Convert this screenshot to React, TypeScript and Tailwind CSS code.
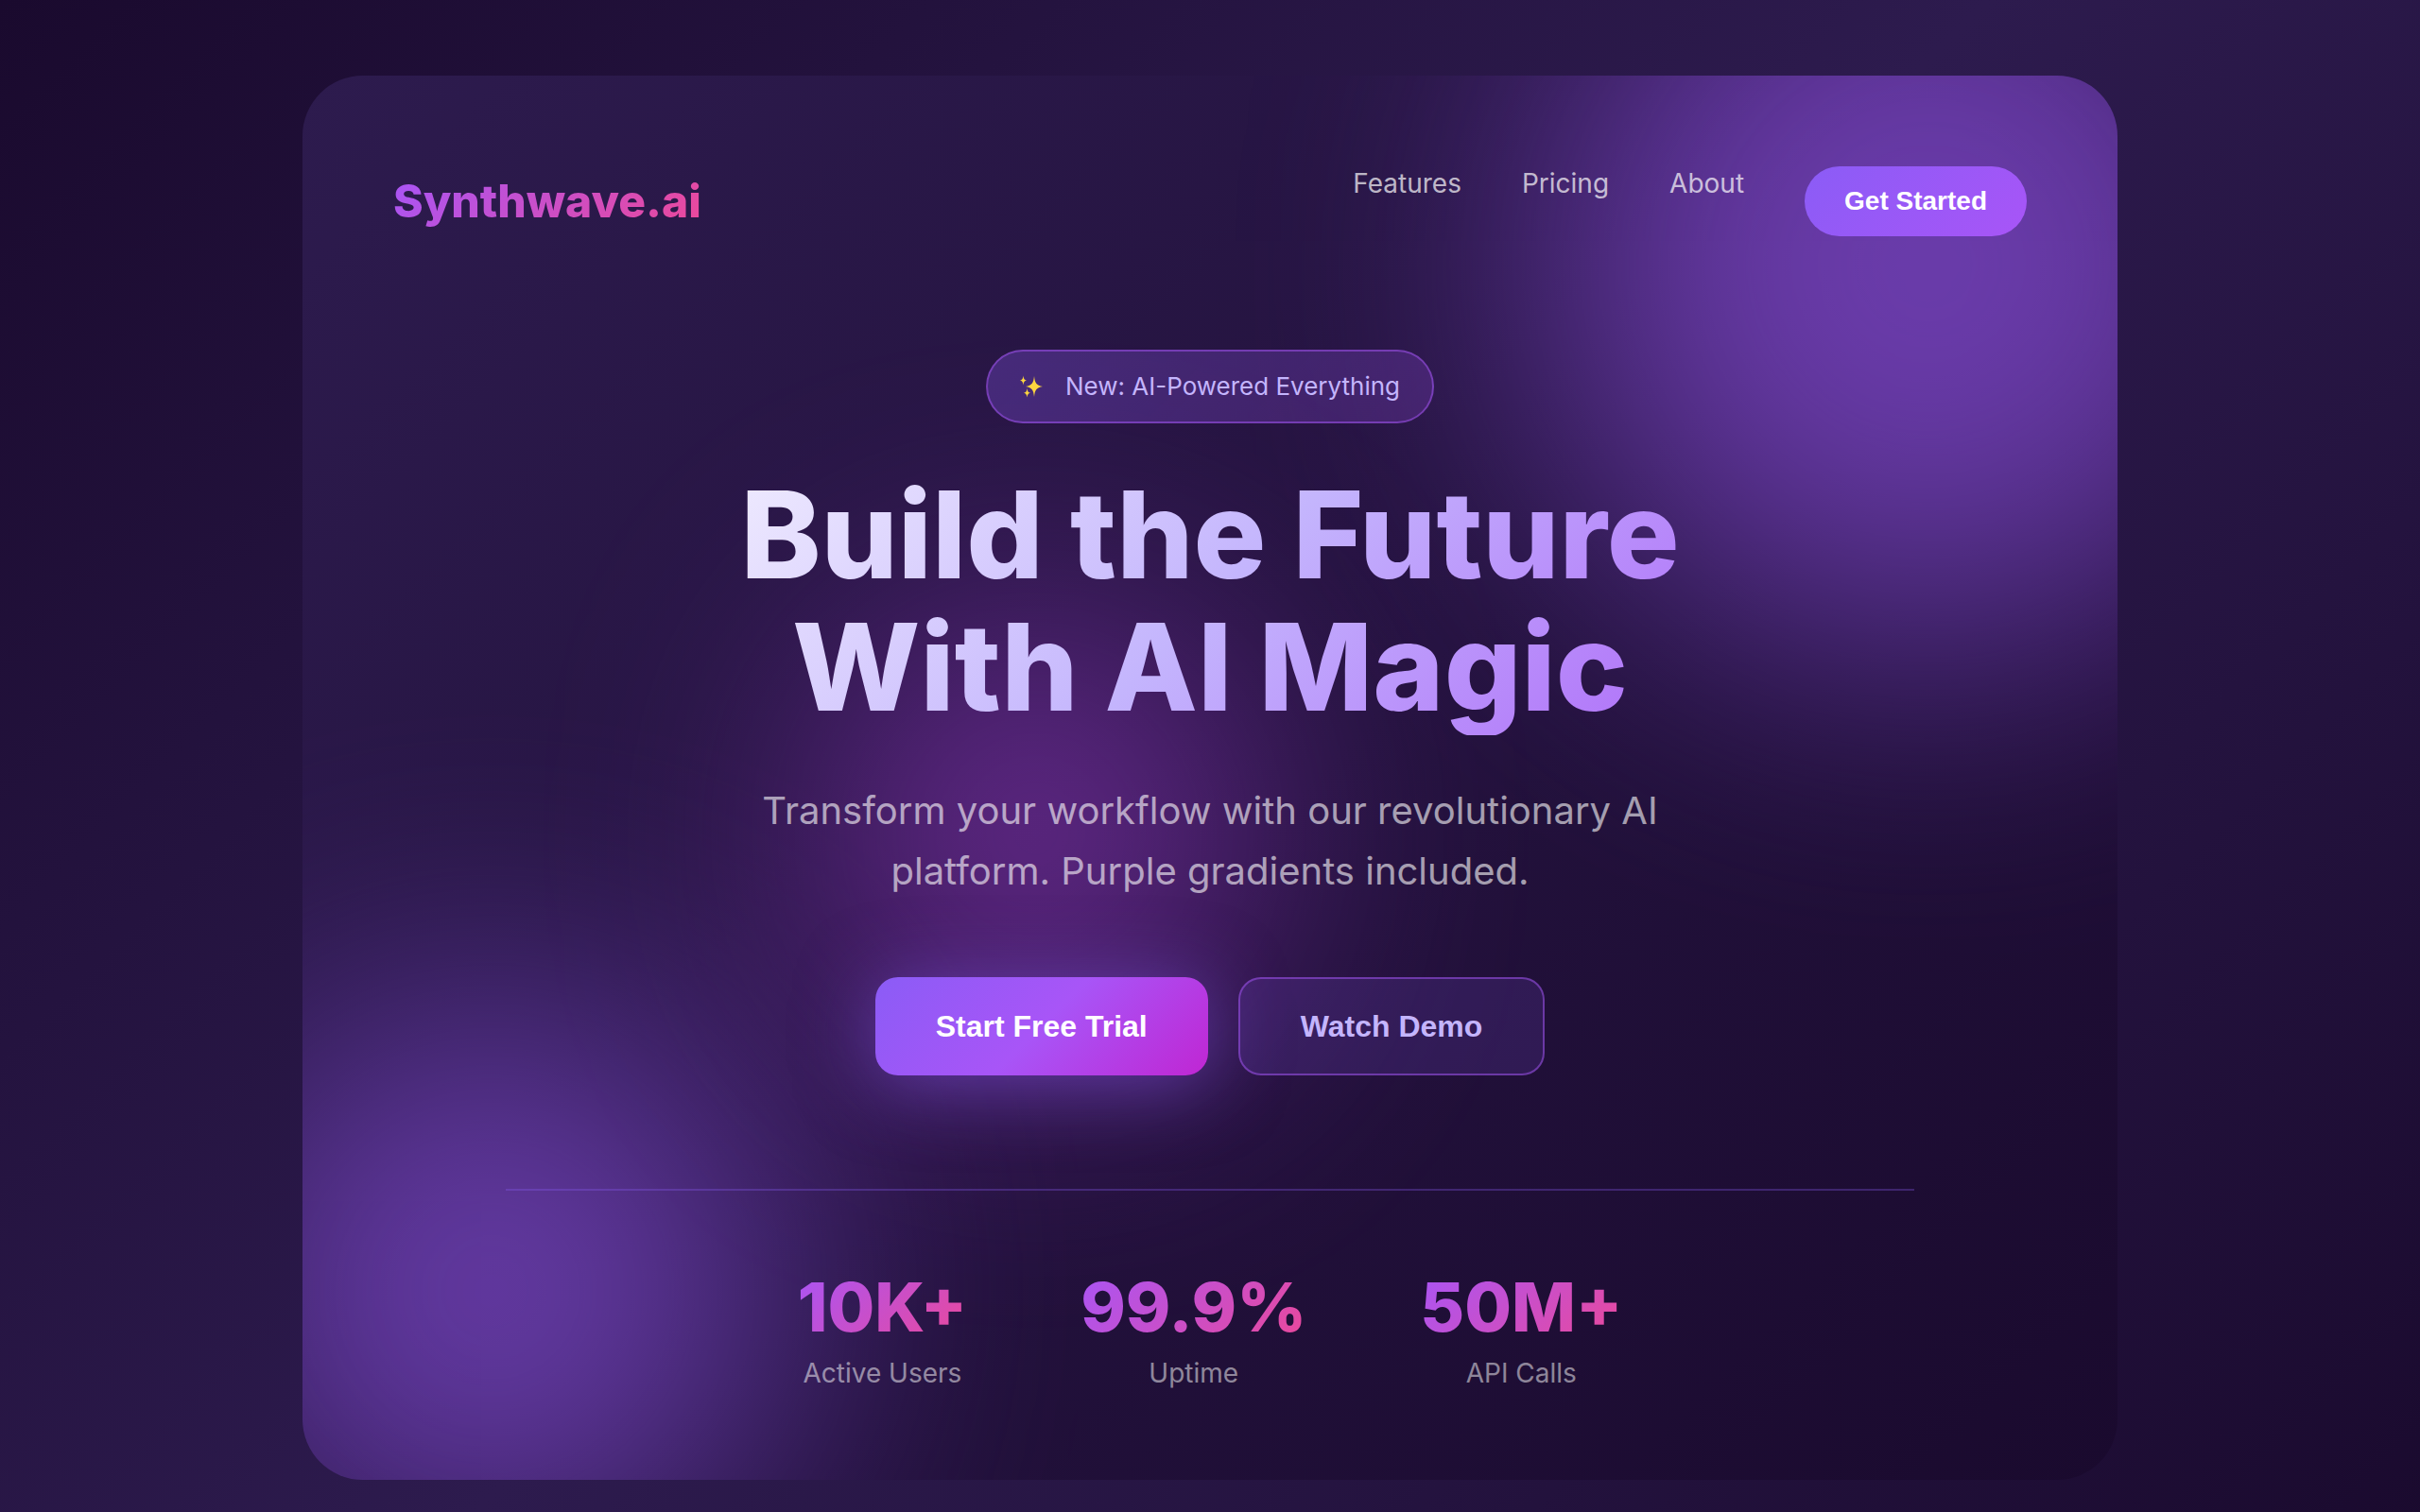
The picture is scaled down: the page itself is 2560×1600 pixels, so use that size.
import React from "react";

type Stat = {
  value: string;
  label: string;
};

const navLinks = ["Features", "Pricing", "About"];

const stats: Stat[] = [
  { value: "10K+", label: "Active Users" },
  { value: "99.9%", label: "Uptime" },
  { value: "50M+", label: "API Calls" },
];

const SparklesIcon: React.FC = () => (
  <svg viewBox="0 0 24 24" className="w-6 h-6" aria-hidden="true">
    <g fill="#fcd53f">
      <path d="M15 1C15.9 8.400 17 10.600 24 12C17 13.400 15.900 15.600 15 23C14.100 15.600 13 13.400 6 12C13 10.600 14.100 8.400 15 1Z" />
      <path d="M3.500 0.500C4 4 4.600 5 7 5.500C4.600 6 4 7 3.500 10.500C3 7 2.400 6 0 5.500C2.400 5 3 4 3.500 0.500Z" />
      <path d="M7.500 14C8 17.200 8.600 18.300 11 18.800C8.600 19.300 8 20.400 7.500 23.600C7 20.400 6.400 19.300 4 18.800C6.400 18.300 7 17.200 7.500 14Z" />
    </g>
  </svg>
);

// Blurred colour blobs behind the hero content
const Glow: React.FC = () => (
  <div className="absolute inset-0 pointer-events-none" aria-hidden="true">
    <div className="absolute -top-[200px] -right-[200px] w-[800px] h-[800px] rounded-full opacity-60 blur-[160px] bg-[#9b59f6]" />
    <div className="absolute -bottom-[100px] -left-[100px] w-[600px] h-[600px] rounded-full opacity-60 blur-[160px] bg-[#9659f2]" />
    <div className="absolute top-[54%] left-[30%] w-[400px] h-[400px] -translate-y-1/2 rounded-full opacity-60 blur-[160px] bg-[#b947ef]" />
  </div>
);

const Header: React.FC = () => (
  <header className="flex items-center justify-between">
    <div className="text-[48px] leading-[58px] font-extrabold bg-[linear-gradient(135deg,#a855f7,#ec4899)] bg-clip-text text-transparent">
      Synthwave.ai
    </div>
    <nav className="flex gap-16 text-[28px] leading-[36px]">
      {navLinks.map((link) => (
        <a key={link} href="#" className="text-white/70 hover:text-white">
          {link}
        </a>
      ))}
      <button className="px-[42px] py-5 rounded-full text-white font-bold leading-[34px] font-['Liberation_Sans',Arial,sans-serif] bg-[linear-gradient(135deg,#8b5cf6,#a855f7)]">
        Get Started
      </button>
    </nav>
  </header>
);

const Stats: React.FC = () => (
  <div className="w-full mt-[120px] pt-20 flex justify-center gap-[120px] border-t-2 border-[#8b5cf6]/30">
    {stats.map((stat) => (
      <div key={stat.label} className="flex flex-col gap-2.5 text-center">
        <div className="text-[72px] leading-[86px] font-extrabold bg-[linear-gradient(135deg,#a855f7,#ec4899)] bg-clip-text text-transparent">
          {stat.value}
        </div>
        <div className="text-[28px] leading-[34px] text-white/50">{stat.label}</div>
      </div>
    ))}
  </div>
);

const Hero: React.FC = () => (
  <main className="max-w-[1490px] mx-auto mt-[120px] flex flex-col items-center text-center">
    <div className="flex items-center gap-6 px-[34px] py-5 rounded-full border-2 border-[#a855f7]/50 bg-[linear-gradient(135deg,#8b5cf64d,#a855f733)] text-[26px] leading-[34px] text-[#c4b5fd]">
      <SparklesIcon />
      New: AI-Powered Everything
    </div>

    <h1 className="w-full mt-12 pb-0.5 text-[128px] leading-[140px] font-extrabold bg-[linear-gradient(135deg,#ffffff_0%,#c4b5fd_50%,#a855f7_100%)] bg-clip-text text-transparent">
      Build the Future
      <br />
      With AI Magic
    </h1>

    <p className="max-w-[1100px] mt-12 text-[40px] leading-[64px] text-white/60">
      Transform your workflow with our revolutionary AI platform. Purple gradients included.
    </p>

    <div className="mt-20 flex gap-8 text-[32px] leading-[36px] font-bold font-['Liberation_Sans',Arial,sans-serif]">
      <button className="px-16 py-8 rounded-3xl text-white bg-[linear-gradient(135deg,#8b5cf6_0%,#a855f7_50%,#c026d3_100%)] shadow-[0_8px_80px_#8b5cf680]">
        Start Free Trial
      </button>
      <button className="px-16 py-8 rounded-3xl text-[#c4b5fd] border-2 border-[#a855f7]/50 bg-[#8b5cf6]/15">
        Watch Demo
      </button>
    </div>

    <Stats />
  </main>
);

const App: React.FC = () => {
  return (
    <div className="min-h-screen p-20 font-['Inter',sans-serif] bg-[linear-gradient(135deg,#1a0a2e_0%,#2d1b4e_50%,#1a0a2e_100%)]">
      <div className="relative max-w-[1920px] mx-auto p-24 rounded-[64px] overflow-hidden bg-[linear-gradient(135deg,#2d1b4e,#1a0a2e)]">
        <Glow />
        <div className="relative">
          <Header />
          <Hero />
        </div>
      </div>
    </div>
  );
};

export default App;
